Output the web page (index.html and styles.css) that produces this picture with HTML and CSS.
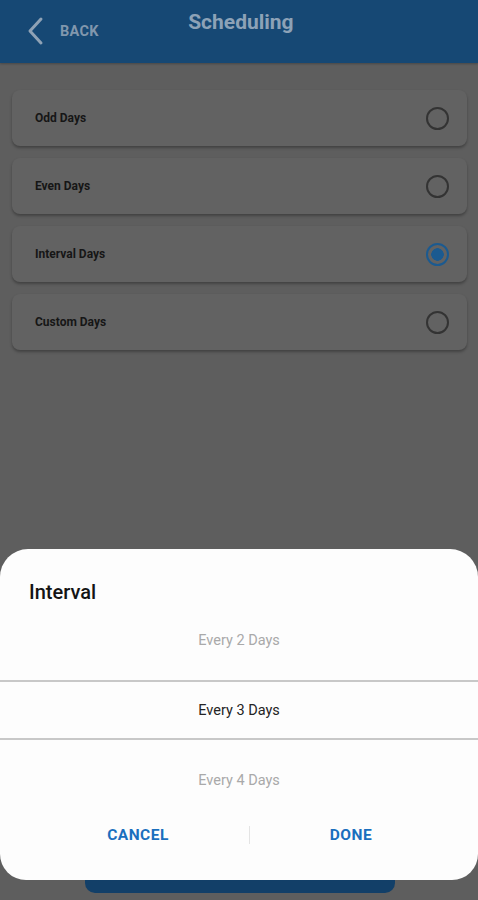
FILE: index.html
```html
<!DOCTYPE html>
<html lang="en">
<head>
    <meta charset="UTF-8">
    <meta name="viewport" content="width=device-width, initial-scale=1.0">
    <title>Scheduling</title>
    <link rel="stylesheet" href="styles.css">
</head>
<body>
    <div class="page">
        <header class="topbar">
            <a class="back" href="#">
                <svg width="18" height="30" viewBox="0 0 18 30">
                    <path d="M15 3 L4 15 L15 27" fill="none" stroke="#8fa2b5" stroke-width="3" stroke-linecap="round" stroke-linejoin="round"/>
                </svg>
                <span>BACK</span>
            </a>
            <h1>Scheduling</h1>
        </header>

        <div class="options">
            <div class="card">
                <span>Odd Days</span>
                <span class="radio"></span>
            </div>
            <div class="card">
                <span>Even Days</span>
                <span class="radio"></span>
            </div>
            <div class="card">
                <span>Interval Days</span>
                <span class="radio checked"></span>
            </div>
            <div class="card">
                <span>Custom Days</span>
                <span class="radio"></span>
            </div>
        </div>

        <button class="save">Save</button>
    </div>

    <div class="sheet">
        <h2>Interval</h2>
        <div class="picker">
            <div class="item item-top">Every 2 Days</div>
            <div class="item item-selected">Every 3 Days</div>
            <div class="item item-bottom">Every 4 Days</div>
        </div>
        <div class="actions">
            <button>CANCEL</button>
            <span class="split"></span>
            <button>DONE</button>
        </div>
    </div>
</body>
</html>
```

FILE: styles.css
```css
body {
    margin: 0;
    font-family: Roboto, "Noto Sans", Arial, sans-serif;
    background-color: #5e5e5e;
    overflow: hidden;
}
.page {
    height: 900px;
    display: flex;
    flex-direction: column;
}
.topbar {
    height: 63px;
    background-color: #164874;
    display: flex;
    align-items: flex-start;
    box-shadow: 0 1px 2px rgba(0, 0, 0, 0.25);
}
.back {
    display: flex;
    align-items: center;
    gap: 16px;
    padding: 16px 0 0 26px;
    color: #8197ad;
    font-size: 14.5px;
    font-weight: 700;
    letter-spacing: 0.3px;
    text-decoration: none;
}
.back span {
    padding-top: 1px;
}
.topbar h1 {
    flex: 1;
    margin: 10px 0 0 0;
    padding-right: 95px;
    text-align: center;
    font-size: 21px;
    font-weight: 700;
    color: #8da2b7;
}
.options {
    display: flex;
    flex-direction: column;
    gap: 12px;
    padding: 27px 11px 0 12px;
}
.card {
    height: 56px;
    background-color: #626262;
    border-radius: 8px;
    box-shadow: 0 2px 3px rgba(0, 0, 0, 0.3);
    display: flex;
    align-items: center;
    justify-content: space-between;
    padding: 0 18px 0 23px;
    font-size: 12px;
    font-weight: 700;
    color: #161616;
}
.radio {
    width: 19px;
    height: 19px;
    border: 2px solid #333;
    border-radius: 50%;
    box-sizing: content-box;
}
.radio.checked {
    border-color: #1b5a90;
    background: radial-gradient(circle, #1b5a90 0 6px, transparent 6.5px);
}
.save {
    margin: auto 83px 7px 85px;
    height: 48px;
    border: none;
    border-radius: 10px;
    background-color: #123f68;
}
.sheet {
    position: fixed;
    left: 0;
    right: 0;
    top: 549px;
    height: 331px;
    background-color: #fdfdfd;
    border-radius: 28px 28px 26px 26px;
}
.sheet h2 {
    margin: 0;
    padding: 31px 0 0 29px;
    font-size: 20px;
    line-height: 24px;
    font-weight: 500;
    color: #141414;
}
.item {
    display: flex;
    align-items: center;
    justify-content: center;
    font-size: 14.5px;
    color: #a9a9a9;
}
.item-top {
    height: 72px;
    padding-bottom: 4px;
}
.item-selected {
    height: 56px;
    border-top: 2px solid #c8c8c8;
    border-bottom: 2px solid #c8c8c8;
    color: #242424;
}
.item-bottom {
    height: 80px;
}
.actions {
    display: grid;
    grid-template-columns: 222px 1px 202px;
    align-items: center;
    padding-left: 27px;
    height: 30px;
}
.actions button {
    border: none;
    background: none;
    font-family: inherit;
    font-size: 15.5px;
    font-weight: 700;
    letter-spacing: 0.5px;
    color: #1a6fbe;
    padding: 0;
}
.split {
    height: 18px;
    background-color: #e4e4e4;
}
```
